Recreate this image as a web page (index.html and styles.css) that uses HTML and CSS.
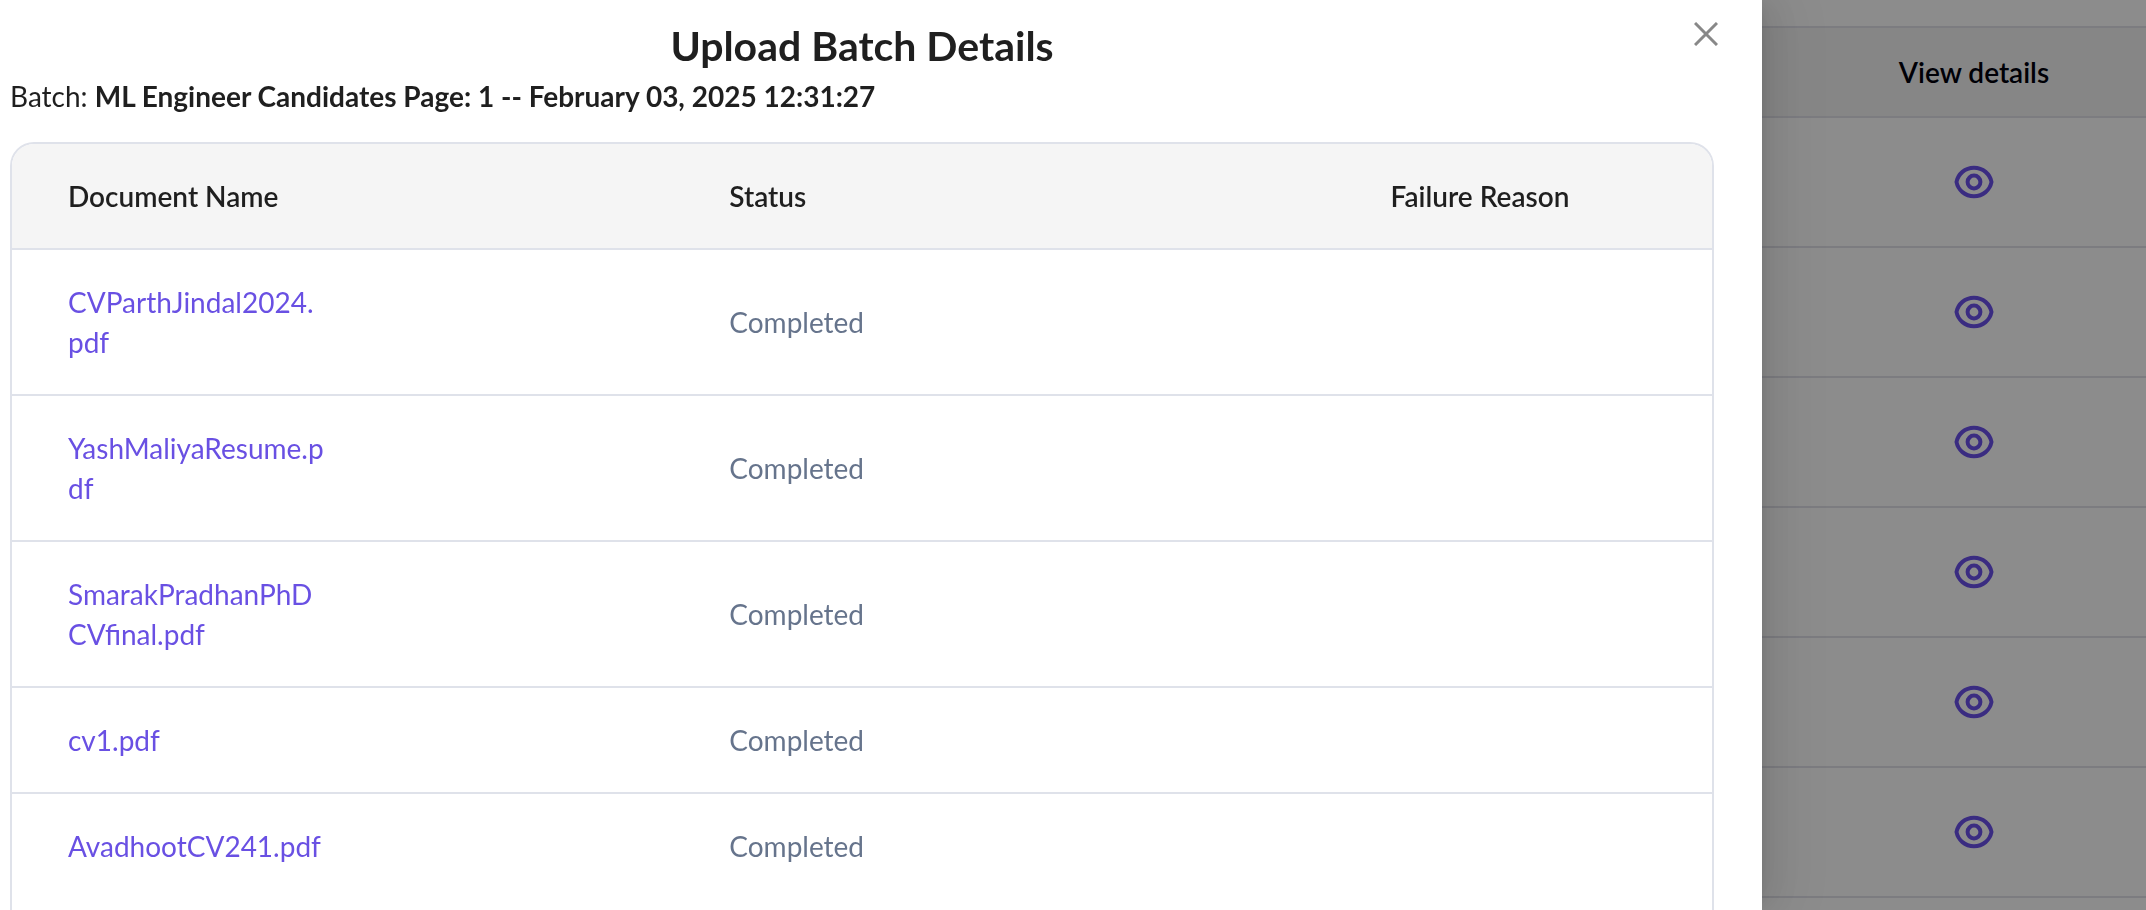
FILE: index.html
```
<!DOCTYPE html>
<html lang="en">
<head>
    <meta charset="UTF-8">
    <meta name="viewport" content="width=device-width, initial-scale=1.0">
    <title>Upload Batch Details</title>
    <link rel="stylesheet" href="styles.css">
</head>
<body>
    <svg class="sprite" aria-hidden="true">
        <symbol id="eye" viewBox="0 0 48 48">
            <path d="M6.500 24C8 16 15 9.800 24 9.800S40 16 41.500 24C40 32 33 38.200 24 38.200S8 32 6.500 24Z"/>
            <circle cx="24" cy="24" r="6.400"/>
        </symbol>
    </svg>

    <!-- Batch list behind the drawer -->
    <main class="page">
        <table class="batches">
            <thead>
                <tr><td></td><th scope="col">View details</th></tr>
            </thead>
            <tbody>
                <tr><td></td><td><button class="view-button" aria-label="View details"><svg class="eye"><use href="#eye"/></svg></button></td></tr>
                <tr><td></td><td><button class="view-button" aria-label="View details"><svg class="eye"><use href="#eye"/></svg></button></td></tr>
                <tr><td></td><td><button class="view-button" aria-label="View details"><svg class="eye"><use href="#eye"/></svg></button></td></tr>
                <tr><td></td><td><button class="view-button" aria-label="View details"><svg class="eye"><use href="#eye"/></svg></button></td></tr>
                <tr><td></td><td><button class="view-button" aria-label="View details"><svg class="eye"><use href="#eye"/></svg></button></td></tr>
                <tr><td></td><td><button class="view-button" aria-label="View details"><svg class="eye"><use href="#eye"/></svg></button></td></tr>
            </tbody>
        </table>
    </main>

    <div class="mask"></div>

    <section class="drawer" role="dialog" aria-labelledby="drawerTitle">
        <button class="close-button" aria-label="Close">
            <svg class="close-icon" viewBox="0 0 24 24"><path d="M1 1L23 23M23 1L1 23"/></svg>
        </button>
        <h1 id="drawerTitle">Upload Batch Details</h1>
        <p class="batch">Batch: <strong>ML Engineer Candidates Page: 1 -- February 03, 2025 12:31:27</strong></p>

        <div class="table-box">
            <table class="documents">
                <thead>
                    <tr>
                        <th scope="col" class="col-name">Document Name</th>
                        <th scope="col" class="col-status">Status</th>
                        <th scope="col">Failure Reason</th>
                    </tr>
                </thead>
                <tbody>
                    <tr>
                        <td><a class="file" href="#">CVParthJindal2024.<wbr>pdf</a></td>
                        <td>Completed</td>
                        <td></td>
                    </tr>
                    <tr>
                        <td><a class="file" href="#">YashMaliyaResume.p<wbr>df</a></td>
                        <td>Completed</td>
                        <td></td>
                    </tr>
                    <tr>
                        <td><a class="file" href="#">SmarakPradhanPhD<wbr>CVfinal.pdf</a></td>
                        <td>Completed</td>
                        <td></td>
                    </tr>
                    <tr>
                        <td><a class="file" href="#">cv1.pdf</a></td>
                        <td>Completed</td>
                        <td></td>
                    </tr>
                    <tr>
                        <td><a class="file" href="#">AvadhootCV241.pdf</a></td>
                        <td>Completed</td>
                        <td></td>
                    </tr>
                </tbody>
            </table>
        </div>
    </section>
</body>
</html>
```

FILE: styles.css
```
* {
    box-sizing: border-box;
}
body {
    margin: 0;
    height: 100vh;
    overflow: hidden;
    background-color: #fff;
    color: #1f1f1f;
    font-family: Lato, sans-serif;
    font-size: 28px;
    line-height: 40px;
}
button {
    padding: 0;
    border: none;
    background: none;
    cursor: pointer;
}
table {
    width: 100%;
    border-collapse: separate;
    border-spacing: 0;
}
.sprite {
    display: none;
}

/* Page behind */
.page {
    padding-top: 26px;
}
.batches th,
.batches td {
    padding: 0;
    border-bottom: 2px solid #e2e2ea;
    text-align: center;
}
.batches th {
    width: 344px;
    color: #00000c;
    font-weight: 600;
}
.batches thead th,
.batches thead td {
    height: 92px;
    border-top: 2px solid #e2e2ea;
    background-color: #f5f5f5;
}
.batches tbody td {
    height: 130px;
}
.view-button {
    display: block;
    margin: 0 auto;
}
.eye {
    display: block;
    width: 48px;
    height: 48px;
    fill: none;
    stroke: #6b50ec;
    stroke-width: 4;
    stroke-linejoin: round;
}

/* Overlay and drawer */
.mask {
    position: fixed;
    inset: 0;
    background-color: rgba(0, 0, 0, 0.45);
}
.drawer {
    position: fixed;
    top: 0;
    bottom: 0;
    left: 0;
    width: calc(100% - 384px);
    display: flex;
    flex-direction: column;
    padding: 16px 48px 0 10px;
    background-color: #fff;
    box-shadow: 12px 0 32px rgba(0, 0, 0, 0.08), 6px 0 12px -8px rgba(0, 0, 0, 0.12), 18px 0 56px 16px rgba(0, 0, 0, 0.05);
}
.close-button {
    position: absolute;
    top: 22px;
    right: 44px;
}
.close-icon {
    display: block;
    width: 24px;
    height: 24px;
    fill: none;
    stroke: #888;
    stroke-width: 3;
}
h1 {
    margin: 0;
    font-size: 41px;
    font-weight: 700;
    line-height: 60px;
    text-align: center;
}
.batch {
    margin: 0 0 26px;
}
.batch strong {
    font-weight: 700;
}
.table-box {
    flex: 1;
    min-height: 0;
    overflow: hidden;
    border: 2px solid #dfe2ea;
    border-bottom: none;
    border-radius: 24px 24px 0 0;
}
.documents {
    table-layout: fixed;
}
.documents th,
.documents td {
    padding: 32px 0 32px 56px;
    border-bottom: 2px solid #dfe2ea;
    text-align: left;
}
.documents th {
    background-color: #f5f5f5;
    font-weight: 600;
}
.documents td {
    color: #66748c;
}
.documents tbody tr:last-child td {
    border-bottom: none;
}
.col-name,
.col-status {
    width: 38.9%;
}
.file {
    display: block;
    width: 264px;
    color: #6950e3;
    text-decoration: none;
}
```
